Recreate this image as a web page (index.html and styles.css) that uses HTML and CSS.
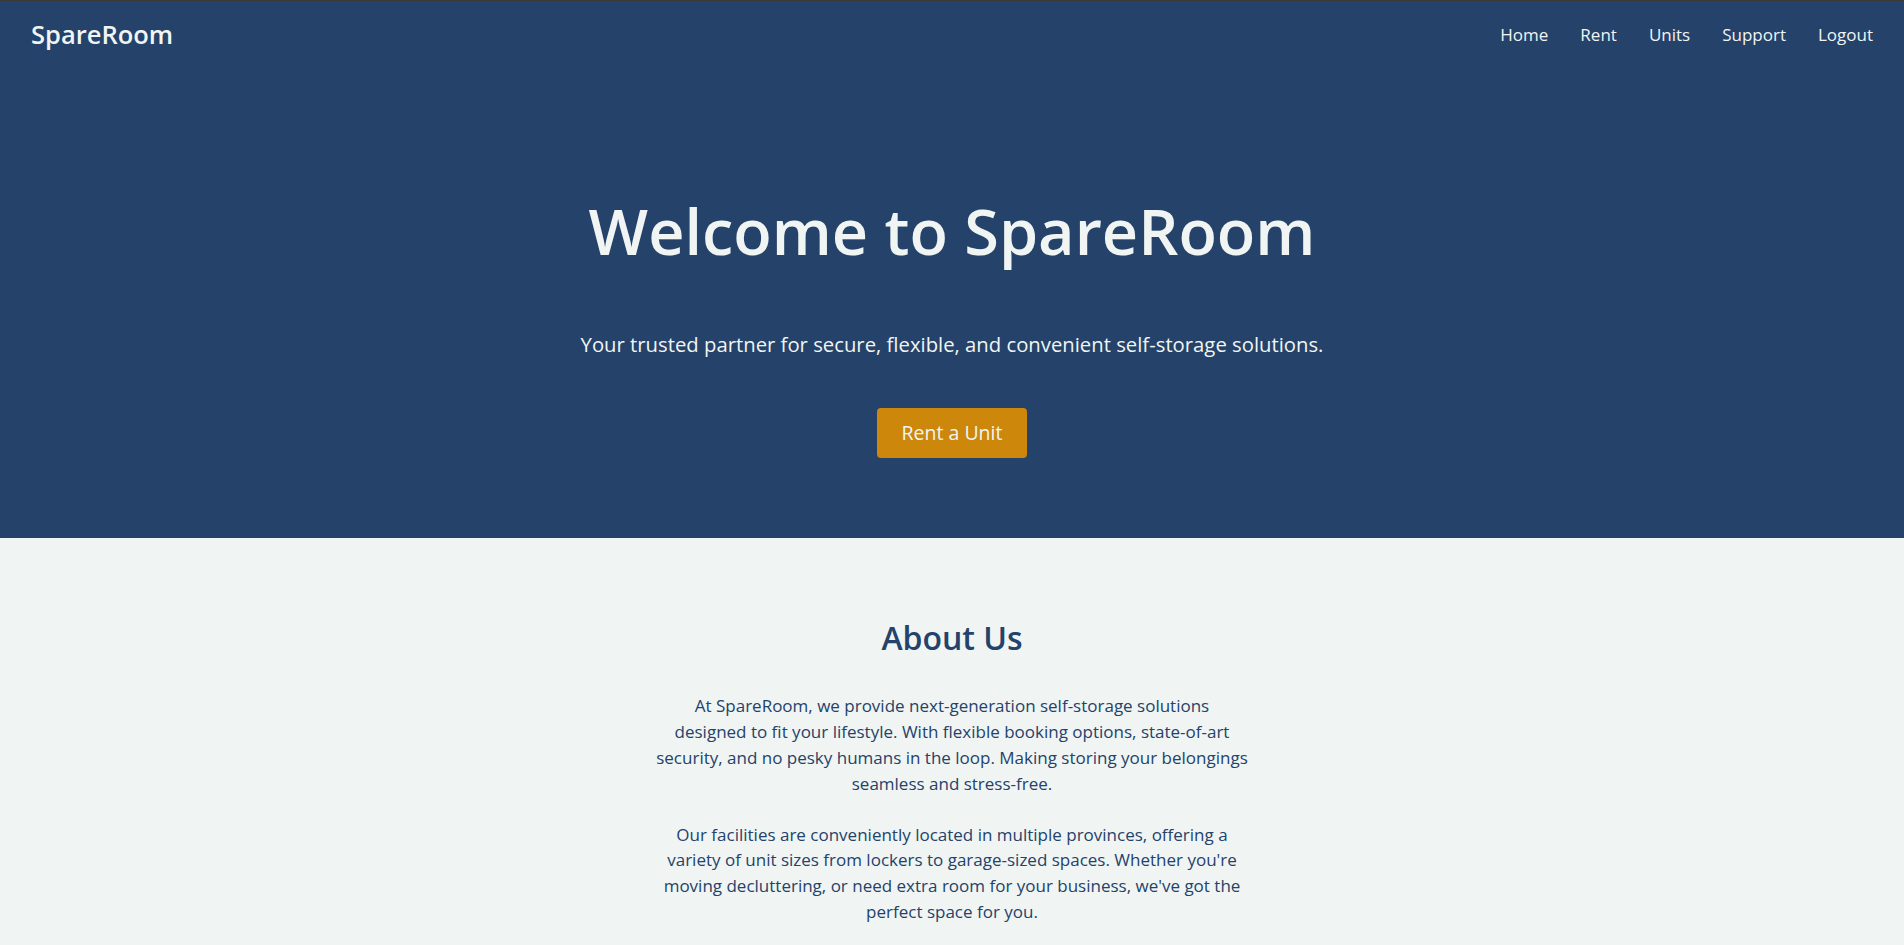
FILE: index.html
```html
<!DOCTYPE html>
<html lang="en">
<head>
<meta charset="utf-8">
<title>SpareRoom</title>
<link rel="stylesheet" href="styles.css">
</head>
<body>
<header class="topbar">
  <a class="logo" href="#">SpareRoom</a>
  <nav class="nav">
    <a href="#">Home</a>
    <a href="#">Rent</a>
    <a href="#">Units</a>
    <a href="#">Support</a>
    <a href="#">Logout</a>
  </nav>
</header>
<section class="hero">
  <h1 class="hero-title">Welcome to SpareRoom</h1>
  <p class="hero-sub">Your trusted partner for secure, flexible, and convenient self-storage solutions.</p>
  <a class="btn" href="#">Rent a Unit</a>
</section>
<section class="about">
  <h2 class="about-title">About Us</h2>
  <p class="about-text">At SpareRoom, we provide next-generation self-storage solutions<br>designed to fit your lifestyle. With flexible booking options, state-of-art security, and no pesky humans in the loop. Making storing your belongings seamless and stress-free.</p>
  <p class="about-text">Our facilities are conveniently located in multiple provinces, offering a variety of unit sizes from lockers to garage-sized spaces. Whether you're moving decluttering, or need extra room for your business, we've got the perfect space for you.</p>
</section>
</body>
</html>
```
FILE: styles.css
```css
* { box-sizing: border-box; }
html, body { margin: 0; padding: 0; }
body {
  font-family: "Open Sans", "Noto Sans", sans-serif;
  background: #f0f5f3;
  color: #24426a;
  border-top: 1px solid #3a3a3a;
}
a { text-decoration: none; color: inherit; }

.topbar {
  background: #24426a;
  color: #f0f5f3;
  height: 68px;
  padding: 0 31px 0 31px;
  display: flex;
  align-items: center;
  justify-content: space-between;
}
.logo {
  font-size: 25.5px;
  font-weight: 600;
  line-height: 1;
}
.nav {
  display: flex;
  gap: 32px;
  font-size: 17px;
  font-weight: 500;
  line-height: 1;
  margin-top: -1px;
}

.hero {
  background: #24426a;
  color: #f0f5f3;
  text-align: center;
  padding: 124px 20px 80px;
}
.hero-title {
  margin: 0;
  font-size: 63px;
  font-weight: 600;
  line-height: 1.2;
}
.hero-sub {
  margin: 60px 0 0;
  font-size: 20.3px;
  line-height: 1.5;
}
.btn {
  display: inline-block;
  margin-top: 49px;
  background: #cd870b;
  color: #f0f5f3;
  font-size: 19.5px;
  line-height: 24px;
  padding: 13px 25px;
  border-radius: 4px;
}

.about {
  text-align: center;
  padding: 81px 20px 40px;
}
.about-title {
  margin: 0 0 36px;
  font-size: 32px;
  font-weight: 600;
  line-height: 1.2;
}
.about-text {
  max-width: 600px;
  margin: 0 auto 25px;
  font-size: 17px;
  line-height: 25.8px;
}
```
